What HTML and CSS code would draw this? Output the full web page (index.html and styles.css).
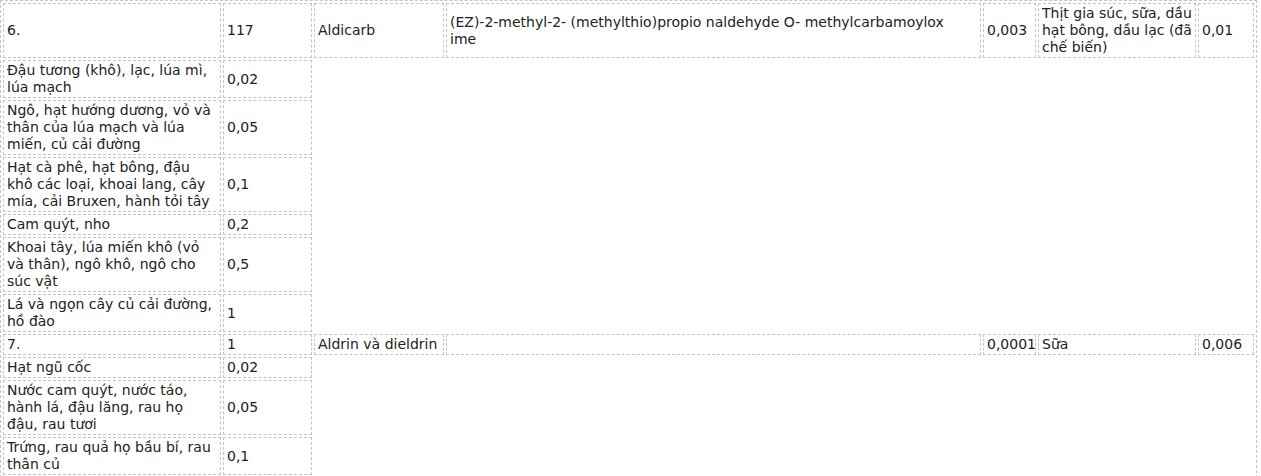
FILE: index.html
```html
<!DOCTYPE html>
<html lang="vi">
<head>
    <meta charset="utf-8">
    <link rel="stylesheet" href="styles.css">
</head>
<body>
<table class="limits" cellspacing="2" cellpadding="0">
    <colgroup>
        <col class="c-food">
        <col class="c-mrl">
        <col class="c-name">
        <col class="c-chem">
        <col class="c-adi">
        <col class="c-item">
        <col class="c-val">
    </colgroup>
    <tr>
        <td>6.</td>
        <td>117</td>
        <td>Aldicarb</td>
        <td>(EZ)-2-methyl-2- (methylthio)propio naldehyde O- methylcarbamoylox<br>ime</td>
        <td>0,003</td>
        <td>Thịt gia súc, sữa, dầu hạt bông, dầu lạc (đã chế biến)</td>
        <td>0,01</td>
    </tr>
    <tr>
        <td>Đậu tương (khô), lạc, lúa mì, lúa mạch</td>
        <td>0,02</td>
    </tr>
    <tr>
        <td>Ngô, hạt hướng dương, vỏ và thân của lúa mạch và lúa miến, củ cải đường</td>
        <td>0,05</td>
    </tr>
    <tr>
        <td>Hạt cà phê, hạt bông, đậu khô các loại, khoai lang, cây mía, cải Bruxen, hành tỏi tây</td>
        <td>0,1</td>
    </tr>
    <tr>
        <td>Cam quýt, nho</td>
        <td>0,2</td>
    </tr>
    <tr>
        <td>Khoai tây, lúa miến khô (vỏ và thân), ngô khô, ngô cho súc vật</td>
        <td>0,5</td>
    </tr>
    <tr>
        <td>Lá và ngọn cây củ cải đường, hồ đào</td>
        <td>1</td>
    </tr>
    <tr>
        <td>7.</td>
        <td>1</td>
        <td>Aldrin và dieldrin</td>
        <td></td>
        <td>0,0001</td>
        <td>Sữa</td>
        <td>0,006</td>
    </tr>
    <tr>
        <td>Hạt ngũ cốc</td>
        <td>0,02</td>
    </tr>
    <tr>
        <td>Nước cam quýt, nước táo, hành lá, đậu lăng, rau họ đậu, rau tươi</td>
        <td>0,05</td>
    </tr>
    <tr>
        <td>Trứng, rau quả họ bầu bí, rau thân củ</td>
        <td>0,1</td>
    </tr>
</table>
</body>
</html>
```
FILE: styles.css
```css
body {
    margin: 0;
    padding: 0;
    font-family: "DejaVu Sans", Verdana, sans-serif;
    font-size: 14px;
    color: #222;
    background: white;
}
.limits {
    table-layout: fixed;
    width: 1257px;
    border: 1px dashed #c4c4c4;
    border-collapse: separate;
    border-spacing: 2px;
}
.limits td {
    box-sizing: border-box;
    border: 1px dashed #c4c4c4;
    padding: 1px 3px;
    line-height: 17px;
    vertical-align: middle;
}
.c-food { width: 218px; }
.c-mrl { width: 89px; }
.c-name { width: 130px; }
.c-chem { width: 535px; }
.c-adi { width: 53px; }
.c-item { width: 158px; }
.c-val { width: 56px; }
```
